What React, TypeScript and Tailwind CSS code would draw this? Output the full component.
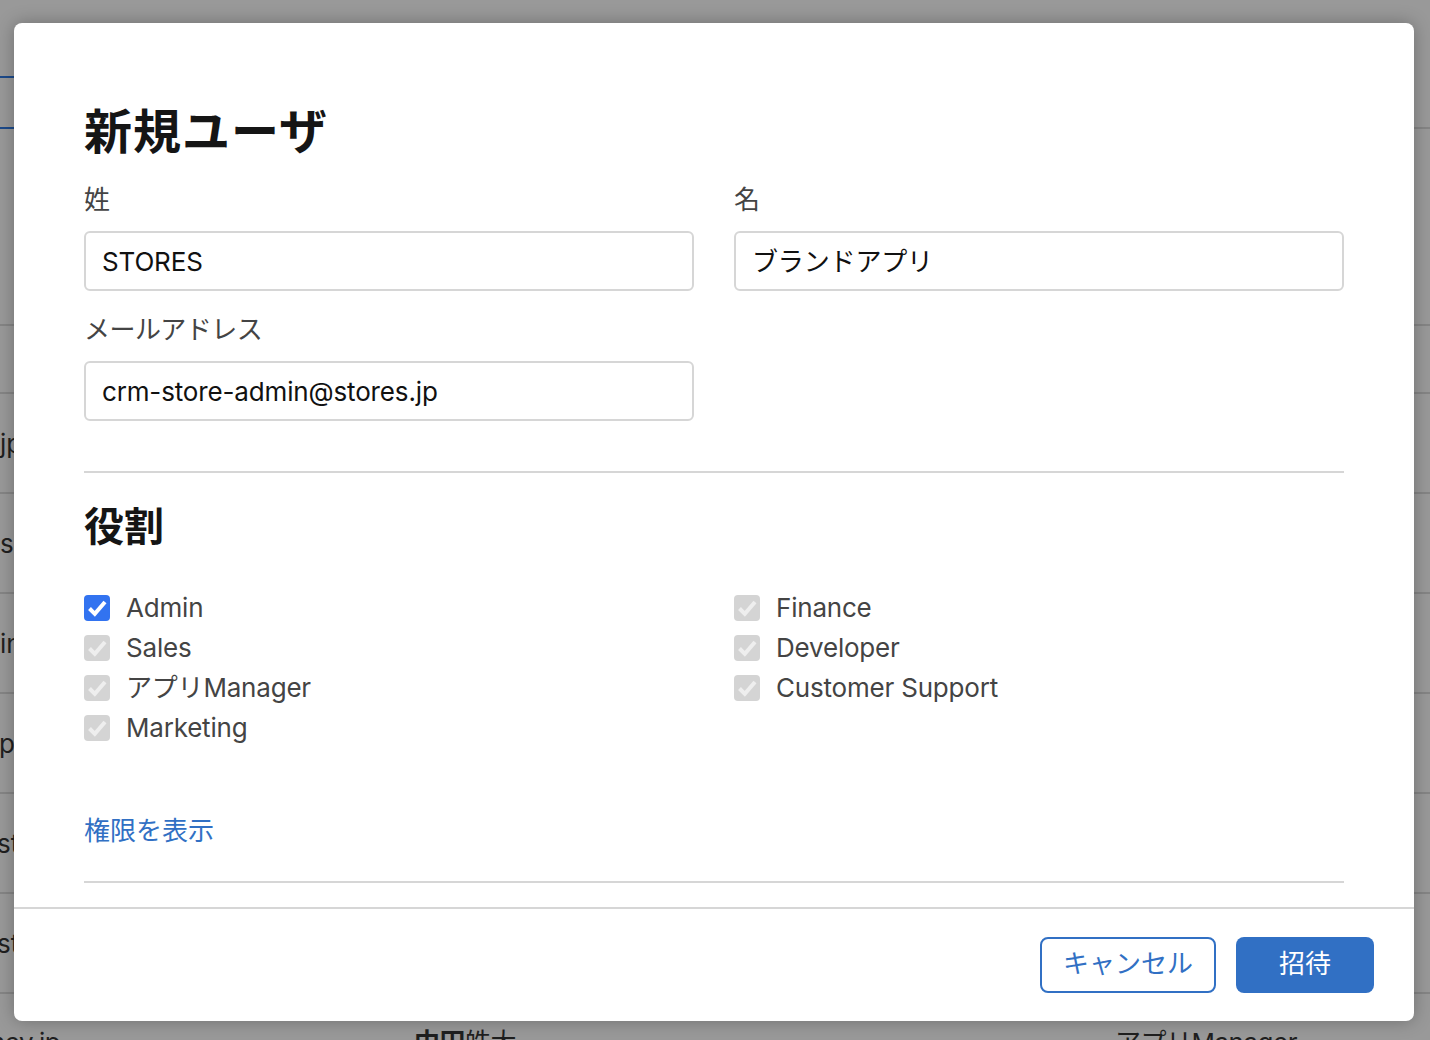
const FONT = 'font-["Inter","Noto_Sans_CJK_JP",sans-serif]';

const LEFT_ROLES = [
  { label: 'Admin', active: true },
  { label: 'Sales' },
  { label: 'アプリManager' },
  { label: 'Marketing' },
];
const RIGHT_ROLES = [{ label: 'Finance' }, { label: 'Developer' }, { label: 'Customer Support' }];

// rows of the user table behind the modal; only the cut-off ends show
const ROWS = [
  { h: 'h-[68px]', text: '', shift: '' },
  { h: 'h-[100px]', text: 'jp', shift: 'ml-0' },
  { h: 'h-[100px]', text: 's', shift: 'ml-0' },
  { h: 'h-[100px]', text: 'in', shift: 'ml-0' },
  { h: 'h-[100px]', text: 'p', shift: '-ml-[1px]' },
  { h: 'h-[100px]', text: 'st', shift: '-ml-[3px]' },
  { h: 'h-[100px]', text: 'st', shift: '-ml-[3px]' },
];

function Check({ active }: { active?: boolean }) {
  return (
    <span
      className={`flex h-[26px] w-[26px] shrink-0 items-center justify-center rounded-[4px] ${
        active ? 'bg-[#3273f0]' : 'bg-[#d4d4d4]'
      }`}
    >
      <svg width="26" height="26" viewBox="0 0 26 26" fill="none">
        <path d="M5.5 13.5 L10.8 18.8 L21 7" stroke={active ? '#ffffff' : '#eeeeee'} strokeWidth="4" />
      </svg>
    </span>
  );
}

function Role({ label, active }: { label: string; active?: boolean }) {
  return (
    <label className="flex h-10 items-center gap-4 text-[26px] tracking-[-0.2px] text-[#444444]">
      <Check active={active} />
      <span className="pb-[2px]">{label}</span>
    </label>
  );
}

function Field({ label, value }: { label: string; value: string }) {
  return (
    <div className="flex w-[610px] flex-col">
      <div className="h-[38px] text-[26px] leading-[36px] tracking-[-0.55px] text-[#444444]">{label}</div>
      <div className="mt-[11px] flex h-[60px] items-center rounded-[6px] border-2 border-[#d6d6d6] px-4 text-[26px] tracking-[-0.15px] text-[#111111]">
        {value}
      </div>
    </div>
  );
}

export default function App() {
  return (
    <div className={`relative h-[1040px] w-[1430px] overflow-hidden bg-[#999999] ${FONT}`}>
      <div className="h-[324px]">
        <div className="h-[78px] w-[14px] border-b-2 border-[#1c4a8a]" />
        <div className="flex h-[51px]">
          <div className="w-[14px] border-b-2 border-[#1c4a8a]" />
          <div className="flex-1 border-b-2 border-[#858585]" />
        </div>
      </div>
      {ROWS.map((row, i) => (
        <div key={i} className={`${row.h} flex items-center border-t-2 border-[#858585] text-[26px] text-[#1f1f1f]`}>
          <span className={row.shift}>{row.text}</span>
        </div>
      ))}
      <div className="flex border-t-2 border-[#858585] pt-[32px] text-[26px] leading-[34px] tracking-[-0.5px] text-[#1f1f1f]">
        <span className="-ml-[10px] w-[424px]">ney.jp</span>
        <span className="w-[701px]">
          <span className="font-semibold">中田</span>皓大
        </span>
        <span>アプリManager</span>
      </div>

      <div className="absolute left-[14px] top-[23px] flex h-[998px] w-[1400px] flex-col rounded-[8px] bg-white shadow-[0_0_18px_rgba(0,0,0,0.28)]">
        <div className="flex-1 px-[70px] pt-[79px]">
          <h1 className="h-[64px] text-[48px] font-bold leading-[60px] tracking-[1px] text-[#151515]">新規ユーザ</h1>
          <div className="mt-[16px] flex gap-10">
            <Field label="姓" value="STORES" />
            <Field label="名" value="ブランドアプリ" />
          </div>
          <div className="mt-[21px]">
            <Field label="メールアドレス" value="crm-store-admin@stores.jp" />
          </div>
          <div className="mt-[50px] border-t-2 border-[#d6d6d6]" />
          <h2 className="mt-[26px] text-[40px] font-bold leading-[56px] text-[#151515]">役割</h2>
          <div className="mt-[33px] flex h-[160px] gap-10">
            <div className="w-[610px]">
              {LEFT_ROLES.map((r) => (
                <Role key={r.label} {...r} />
              ))}
            </div>
            <div className="w-[610px]">
              {RIGHT_ROLES.map((r) => (
                <Role key={r.label} {...r} />
              ))}
            </div>
          </div>
          <div className="mt-[65px] text-[26px] leading-[36px] text-[#3170c4]">権限を表示</div>
          <div className="mt-[32px] border-t-2 border-[#d6d6d6]" />
        </div>
        <div className="flex h-[114px] items-start justify-end gap-5 border-t-2 border-[#d6d6d6] px-10 pt-[28px]">
          <button className="h-[56px] w-[176px] rounded-[8px] border-2 border-[#3170c4] bg-white pb-[3px] text-[26px] text-[#3170c4]">
            キャンセル
          </button>
          <button className="h-[56px] w-[138px] rounded-[8px] bg-[#3170c4] pb-[3px] text-[26px] text-white">招待</button>
        </div>
      </div>
    </div>
  );
}
